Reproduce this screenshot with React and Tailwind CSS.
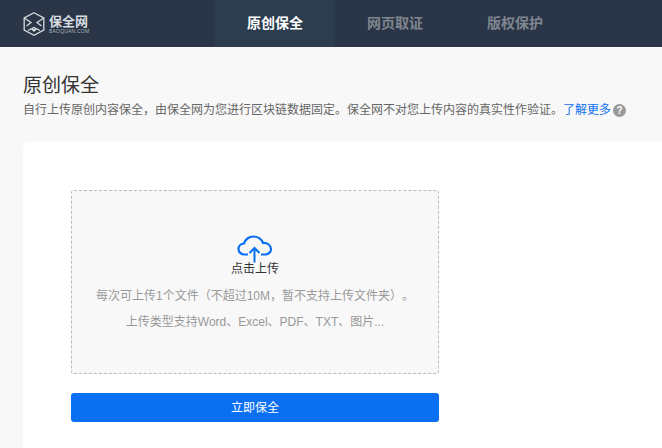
const font = { fontFamily: '"Liberation Sans", "Noto Sans CJK SC", sans-serif' }

function Logo() {
  return (
    <div className="flex items-center w-[215px] pl-[23px]">
      <svg width="22" height="24" viewBox="0 0 22 24" fill="none" stroke="#d5d9de" strokeWidth="1.3">
        <path d="M11 .8 L20.8 6 V18 L11 23.2 L1.2 18 V6 Z" />
        <path d="M1.2 6 L8 10.5 L3.5 14 M20.8 6 L14 10.5 L18.5 14 M5 18.5 L11 15.5 L17 18.5" />
        <path d="M9.3 17.5 H12.7 L11 19.2 Z" fill="#d5d9de" />
      </svg>
      <div className="ml-[4px] flex flex-col items-start mt-[2px]">
        <span className="text-[13px] leading-[13px] font-bold text-[#d9dce0]">保全网</span>
        <span className="text-[5px] leading-[6px] text-[#a9b0b8] tracking-[0.2px]">BAOQUAN.COM</span>
      </div>
    </div>
  )
}

function CloudIcon() {
  return (
    <svg width="36" height="30" viewBox="0 0 36 30" fill="none" stroke="#0b6ff2">
      <path strokeWidth="2.2" d="M11 19.5 H7.5 C4 19.5 1.5 17 1.5 14 C1.5 11 3.8 8.7 7 8.5 C8 4.5 12 1.5 16.5 1.5 C21.5 1.5 25.3 4.8 26 8 C30.5 7.5 34 10.5 34 14 C34 17 31.5 19.5 28 19.5 H24" />
      <path strokeWidth="2" d="M17.5 27.5 V13 M12.5 18 L17.5 13 L22.5 18" />
    </svg>
  )
}

export default function App() {
  return (
    <div className="w-[662px] h-[448px] overflow-hidden bg-[#f8f8f8] flex flex-col [text-spacing-trim:space-all]" style={font}>
      {/* Header */}
      <div className="h-[47px] shrink-0 flex bg-[#2a3647]">
        <Logo />
        <div className="w-[120px] flex items-center justify-center bg-[#2c3d4f] text-white text-[14px] font-bold">原创保全</div>
        <div className="w-[120px] flex items-center justify-center text-[#7f868f] text-[14px] font-bold">网页取证</div>
        <div className="w-[120px] flex items-center justify-center text-[#7f868f] text-[14px] font-bold">版权保护</div>
      </div>

      {/* Page title */}
      <div className="pl-[23px] pt-[27px] shrink-0">
        <h1 className="text-[19px] leading-[24px] text-[#333]">原创保全</h1>
        <div className="mt-[2px] flex items-center text-[12px] leading-[20px] text-[#666]">
          <span>自行上传原创内容保全，由保全网为您进行区块链数据固定。保全网不对您上传内容的真实性作验证。</span>
          <span className="text-[#0b6ff2]">了解更多</span>
          <span className="ml-[2px] w-[13px] h-[13px] rounded-full bg-[#999] text-white text-[10px] leading-[13px] font-bold text-center">?</span>
        </div>
      </div>

      {/* Card */}
      <div className="ml-[23px] mt-[22px] flex-1 bg-white rounded-tl-[6px] pl-[48px] pt-[48px]">
        <div className="w-[368px] h-[184px] border border-dashed border-[#bbb] rounded-[3px] bg-[#f8f8f8] flex flex-col items-center pt-[44px]">
          <CloudIcon />
          <div className="mt-[-4px] text-[12px] leading-[16px] text-[#333]">点击上传</div>
          <div className="mt-[10px] text-[12px] leading-[18px] text-[#999]">每次可上传1个文件（不超过10M，暂不支持上传文件夹）。</div>
          <div className="mt-[8px] text-[12px] leading-[18px] text-[#999]">上传类型支持Word、Excel、PDF、TXT、图片...</div>
        </div>
        <button className="mt-[19px] w-[368px] h-[29px] rounded-[3px] bg-[#0b6ff2] text-white text-[12px] block">立即保全</button>
      </div>
    </div>
  )
}
